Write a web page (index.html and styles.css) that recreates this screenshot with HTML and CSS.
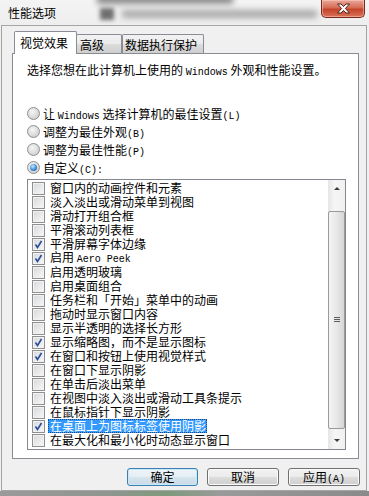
FILE: index.html
```html
<!DOCTYPE html>
<html lang="zh-CN">
<head>
  <meta charset="UTF-8">
  <title>性能选项</title>
  <link rel="stylesheet" href="styles.css">
</head>
<body>
  <div class="window">
    <div class="titlebar">
      <div class="glass-blur">
        <div class="blur-top"></div>
        <div class="blur-icon"></div>
        <div class="blur-text"></div>
      </div>
      <span class="title">性能选项</span>
      <button class="close" aria-label="关闭">
        <svg width="15" height="11" viewBox="0 0 15 11">
          <path d="M1.5 1 H5 L7.5 3.6 L10 1 H13.5 L9.4 5.5 L13.5 10 H10 L7.5 7.4 L5 10 H1.5 L5.6 5.5 Z" fill="#fff" stroke="#4a2019" stroke-width="1" stroke-linejoin="round"/>
        </svg>
      </button>
    </div>

    <div class="client">
      <div class="tabs">
        <div class="tab active">视觉效果</div>
        <div class="tab tab-adv">高级</div>
        <div class="tab tab-dep">数据执行保护</div>
      </div>

      <div class="panel">
        <p class="intro">选择您想在此计算机上使用的 <span class="lat">Windows</span> 外观和性能设置。</p>

        <div class="radios">
          <div class="radio-row"><span class="radio"></span><span class="text">让 <span class="lat">Windows</span> 选择计算机的最佳设置<span class="lat">(L)</span></span></div>
          <div class="radio-row"><span class="radio"></span><span class="text">调整为最佳外观<span class="lat">(B)</span></span></div>
          <div class="radio-row"><span class="radio"></span><span class="text">调整为最佳性能<span class="lat">(P)</span></span></div>
          <div class="radio-row"><span class="radio on"></span><span class="text">自定义<span class="lat">(C):</span></span></div>
        </div>

        <div class="listbox">
          <ul class="items">
            <li><span class="cb"></span><span class="label">窗口内的动画控件和元素</span></li>
            <li><span class="cb"></span><span class="label">淡入淡出或滑动菜单到视图</span></li>
            <li><span class="cb"></span><span class="label">滑动打开组合框</span></li>
            <li><span class="cb"></span><span class="label">平滑滚动列表框</span></li>
            <li><span class="cb checked"></span><span class="label">平滑屏幕字体边缘</span></li>
            <li><span class="cb checked"></span><span class="label">启用 <span class="lat">Aero Peek</span></span></li>
            <li><span class="cb"></span><span class="label">启用透明玻璃</span></li>
            <li><span class="cb"></span><span class="label">启用桌面组合</span></li>
            <li><span class="cb"></span><span class="label">任务栏和「开始」菜单中的动画</span></li>
            <li><span class="cb"></span><span class="label">拖动时显示窗口内容</span></li>
            <li><span class="cb"></span><span class="label">显示半透明的选择长方形</span></li>
            <li><span class="cb checked"></span><span class="label">显示缩略图，而不是显示图标</span></li>
            <li><span class="cb checked"></span><span class="label">在窗口和按钮上使用视觉样式</span></li>
            <li><span class="cb"></span><span class="label">在窗口下显示阴影</span></li>
            <li><span class="cb"></span><span class="label">在单击后淡出菜单</span></li>
            <li><span class="cb"></span><span class="label">在视图中淡入淡出或滑动工具条提示</span></li>
            <li><span class="cb"></span><span class="label">在鼠标指针下显示阴影</span></li>
            <li class="sel"><span class="cb checked"></span><span class="label">在桌面上为图标标签使用阴影</span></li>
            <li><span class="cb"></span><span class="label">在最大化和最小化时动态显示窗口</span></li>
          </ul>
          <div class="scrollbar">
            <div class="sb-btn"><span class="arrow up"></span></div>
            <div class="sb-track">
              <div class="sb-thumb"><span class="grip"></span></div>
            </div>
            <div class="sb-btn"><span class="arrow down"></span></div>
          </div>
        </div>
      </div>

      <div class="buttons">
        <button class="btn default">确定</button>
        <button class="btn">取消</button>
        <button class="btn">应用<span class="lat">(A)</span></button>
      </div>
    </div>
    <div class="glass-bottom"></div>
  </div>
</body>
</html>
```

FILE: styles.css
```css
body {
  margin: 0;
  width: 369px;
  height: 496px;
  overflow: hidden;
  font-family: "Noto Sans CJK SC", sans-serif;
  font-size: 12px;
  color: #000;
  background-color: #eef0f2;
}
.lat {
  font-family: "Liberation Mono", monospace;
  font-size: 10px;
}
.window {
  display: flex;
  flex-direction: column;
  height: 496px;
}
.titlebar {
  height: 25px;
  display: flex;
  align-items: flex-start;
  padding: 0 4px 0 8px;
  position: relative;
  background: linear-gradient(#f4f4f4, #eeeeee);
}
.glass-blur {
  position: absolute;
  top: 0;
  left: 0;
  right: 0;
  bottom: 0;
  overflow: hidden;
}
.blur-top {
  position: absolute;
  left: 97px;
  top: -6px;
  width: 136px;
  height: 10px;
  background-color: #8a8a8a;
  filter: blur(3px);
}
.blur-icon {
  position: absolute;
  left: 100px;
  top: 8px;
  width: 14px;
  height: 12px;
  background-color: #6e6e6e;
  filter: blur(2px);
}
.blur-text {
  position: absolute;
  left: 122px;
  top: 10px;
  width: 195px;
  height: 8px;
  background-color: #a9a9a9;
  filter: blur(3px);
}
.title {
  position: relative;
  line-height: 26px;
  font-size: 12px;
}
.close {
  position: relative;
  margin-left: auto;
  width: 44px;
  height: 18px;
  padding: 0;
  border: 1px solid #7a2a1d;
  border-top: none;
  border-radius: 0 0 5px 5px;
  background: linear-gradient(#e9a899, #d66c55 45%, #c4442b 55%, #d9735a);
  box-shadow: inset 0 0 0 1px rgba(255, 210, 200, 0.5);
  display: flex;
  align-items: center;
  justify-content: center;
}
.client {
  width: 366px;
  height: 466px;
  box-sizing: border-box;
  margin-left: 1px;
  border: 1px solid #a5a5a5;
  background-color: #f0f0f0;
  padding: 5px 0 0 10px;
}
.tabs {
  display: flex;
  align-items: flex-start;
  height: 23px;
  margin-bottom: -1px;
  padding-left: 2px;
  position: relative;
  z-index: 1;
}
.tab {
  box-sizing: border-box;
  height: 19px;
  margin-top: 3px;
  border: 1px solid #898c95;
  border-bottom: none;
  border-radius: 2px 2px 0 0;
  background: linear-gradient(#f2f2f2, #ebebeb 50%, #dddddd 50%, #cfcfcf);
  line-height: 19px;
  padding-left: 3px;
  white-space: nowrap;
}
.tab.active {
  width: 63px;
  height: 23px;
  margin-top: 0;
  margin-right: -1px;
  padding-left: 5px;
  line-height: 21px;
  background: #fff;
  position: relative;
  z-index: 2;
}
.tab-adv {
  width: 46px;
}
.tab-dep {
  width: 82px;
  padding-left: 2px;
}
.panel {
  width: 347px;
  height: 406px;
  box-sizing: border-box;
  border: 1px solid #898c95;
  background-color: #fff;
  padding: 9px 0 0 14px;
}
.intro {
  margin: 0;
  line-height: 14px;
  white-space: nowrap;
}
.radios {
  margin-top: 24px;
}
.radio-row {
  height: 18px;
  display: flex;
  align-items: center;
  white-space: nowrap;
}
.radio {
  width: 11px;
  height: 11px;
  flex-shrink: 0;
  border: 1px solid #8e8f8f;
  border-radius: 50%;
  margin-right: 3px;
  background: radial-gradient(circle at 40% 35%, #f6f6f6, #d4d4d4 70%, #c2c2c2);
  position: relative;
}
.radio.on::after {
  content: "";
  position: absolute;
  left: 2px;
  top: 2px;
  width: 7px;
  height: 7px;
  border-radius: 50%;
  background: radial-gradient(circle at 40% 35%, #c6e6fb, #3f8ed6 55%, #1a4f95);
}
.listbox {
  margin-top: 3px;
  width: 319px;
  height: 271px;
  box-sizing: border-box;
  border: 1px solid #828790;
  background-color: #fff;
  display: flex;
}
.items {
  flex: 1;
  list-style: none;
  margin: 0;
  padding: 1px 0 0 4px;
}
.items li {
  height: 14px;
  line-height: 14px;
  display: flex;
  align-items: center;
  white-space: nowrap;
}
.cb {
  width: 11px;
  height: 11px;
  flex-shrink: 0;
  border: 1px solid #8f8f8f;
  margin-right: 5px;
  background: linear-gradient(135deg, #d6d8db, #f8f8f8);
  box-shadow: inset 0 0 0 1px #f2f2f2;
}
.cb.checked {
  background: url("data:image/svg+xml,%3Csvg xmlns='http://www.w3.org/2000/svg' width='11' height='11'%3E%3Cpath d='M2.5 5.5 L4.5 8.5 L8.5 2' fill='none' stroke='%232a4c9a' stroke-width='1.6'/%3E%3C/svg%3E") no-repeat center, linear-gradient(135deg, #d6d8db, #f8f8f8);
}
.label {
  line-height: 14px;
}
.sel .label {
  background-color: #3399ff;
  color: #fff;
  margin-left: -2px;
  padding: 0 1px 0 2px;
  outline: 1px dotted #1a4a80;
  outline-offset: -1px;
}
.scrollbar {
  width: 17px;
  display: flex;
  flex-direction: column;
  background: linear-gradient(to right, #e6e6e6, #f6f6f6 40%, #f0f0f0);
}
.sb-btn {
  height: 17px;
  display: flex;
  align-items: center;
  justify-content: center;
}
.arrow {
  width: 0;
  height: 0;
  border-left: 3px solid transparent;
  border-right: 3px solid transparent;
}
.arrow.up {
  border-bottom: 3px solid #3c3c3c;
}
.arrow.down {
  border-top: 3px solid #3c3c3c;
}
.sb-track {
  flex: 1;
  padding-top: 14px;
}
.sb-thumb {
  height: 218px;
  box-sizing: border-box;
  border: 1px solid #9a9a9a;
  border-radius: 2px;
  background: linear-gradient(to right, #f4f4f4, #e8e8e8 50%, #d6d6d6);
  display: flex;
  align-items: center;
  justify-content: center;
}
.grip {
  width: 6px;
  height: 6px;
  background: repeating-linear-gradient(#5c5c5c 0 1px, transparent 1px 2px);
}
.buttons {
  width: 348px;
  display: flex;
  justify-content: flex-end;
  gap: 9px;
  margin-top: 9px;
}
.btn {
  width: 72px;
  height: 18px;
  padding: 0;
  border: 1px solid #707070;
  border-radius: 3px;
  font-family: "Noto Sans CJK SC", sans-serif;
  font-size: 12px;
  line-height: 16px;
  color: #000;
  background: linear-gradient(#f2f2f2, #ebebeb 50%, #dddddd 50%, #cfcfcf);
  box-shadow: inset 0 0 0 1px #fbfbfb;
}
.btn.default {
  width: 71px;
  border-color: #3c7fb1;
  background: linear-gradient(#eef5f9, #e4eef4 50%, #d6e5ee 50%, #cadbe6);
  box-shadow: inset 0 0 0 1px #c6e8f8;
}
.glass-bottom {
  flex: 1;
  background: linear-gradient(to right, #9a9a9a, #8f958f 30%, #7e9a7a 45%, #9a9a9a 60%, #8a8a8a);
}
```
